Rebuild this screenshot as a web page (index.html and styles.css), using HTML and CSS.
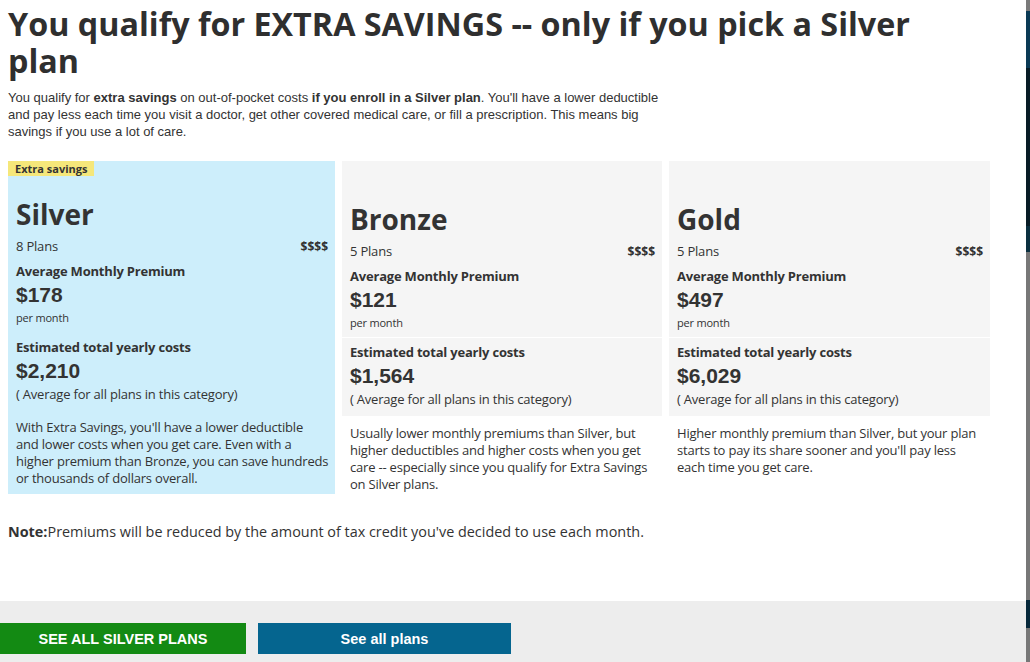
FILE: index.html
```html
<!DOCTYPE html>
<html>
  <head>
    <meta charset="utf-8" />
    <title>Extra savings</title>
    <link rel="stylesheet" href="styles.css">
  </head>
  <body>
    <div class="page">
      <div class="modal">
        <div class="content">
          <h1>You qualify for EXTRA SAVINGS -- only if you pick a Silver plan</h1>
          <p class="intro">
            You qualify for <b>extra savings</b> on out-of-pocket costs <b>if you enroll in a Silver plan</b>. You'll have a lower deductible
            and pay less each time you visit a doctor, get other covered medical care, or fill a prescription. This means big
            savings if you use a lot of care.
          </p>

          <div class="tiers">
            <!-- silver gets the highlight and the badge -->
            <div class="tier tier-silver">
              <div class="tier-top">
                <span class="badge">Extra savings</span>
                <h2>Silver</h2>
                <div class="tier-count"><span>8 Plans</span><b>$$$$</b></div>
                <div class="label">Average Monthly Premium</div>
                <div class="amount">$178</div>
                <div class="per">per month</div>
              </div>
              <div class="tier-cost">
                <div class="label">Estimated total yearly costs</div>
                <div class="amount">$2,210</div>
                <div class="avg">( Average for all plans in this category)</div>
              </div>
              <div class="tier-desc">
                With Extra Savings, you'll have a lower deductible<br>
                and lower costs when you get care. Even with a higher premium than Bronze, you can save hundreds or thousands of dollars overall.
              </div>
            </div>

            <div class="tier">
              <div class="tier-top">
                <span class="badge-space"></span>
                <h2>Bronze</h2>
                <div class="tier-count"><span>5 Plans</span><b>$$$$</b></div>
                <div class="label">Average Monthly Premium</div>
                <div class="amount">$121</div>
                <div class="per">per month</div>
              </div>
              <div class="tier-cost">
                <div class="label">Estimated total yearly costs</div>
                <div class="amount">$1,564</div>
                <div class="avg">( Average for all plans in this category)</div>
              </div>
              <div class="tier-desc">
                Usually lower monthly premiums than Silver, but higher deductibles and higher costs when you get care -- especially since you qualify for Extra Savings on Silver plans.
              </div>
            </div>

            <div class="tier">
              <div class="tier-top">
                <span class="badge-space"></span>
                <h2>Gold</h2>
                <div class="tier-count"><span>5 Plans</span><b>$$$$</b></div>
                <div class="label">Average Monthly Premium</div>
                <div class="amount">$497</div>
                <div class="per">per month</div>
              </div>
              <div class="tier-cost">
                <div class="label">Estimated total yearly costs</div>
                <div class="amount">$6,029</div>
                <div class="avg">( Average for all plans in this category)</div>
              </div>
              <div class="tier-desc">
                Higher monthly premium than Silver, but your plan starts to pay its share sooner and you'll pay less each time you get care.
              </div>
            </div>
          </div>

          <p class="note"><b>Note:</b>Premiums will be reduced by the amount of tax credit you've decided to use each month.</p>
        </div>

        <div class="actions">
          <button class="btn btn-green">SEE ALL SILVER PLANS</button>
          <button class="btn btn-blue">See all plans</button>
        </div>
      </div>
      <div class="backdrop"></div>
    </div>
  </body>
</html>
```

FILE: styles.css
```css
html,
body {
  margin: 0;
  height: 100%;
  overflow: hidden;
}

body {
  font-family: "Open Sans", Arial, sans-serif;
  color: #333;
  background: #fff;
}

.page {
  display: flex;
  height: 662px;
}

.modal {
  flex: 1;
  display: flex;
  flex-direction: column;
}

/* the page behind the modal shows through on the right */
.backdrop {
  width: 4px;
  background: linear-gradient(
    to bottom,
    #7a7a7a 0 11px,
    #0b3a55 11px 68px,
    #081c26 68px 226px,
    #0b3040 226px 252px,
    #777 252px 600px,
    #06283a 600px 628px,
    #777 628px
  );
}

.content {
  flex: 1;
  padding: 0 8px;
}

h1 {
  margin: 0;
  max-width: 960px;
  padding-top: 5px;
  font-size: 32.3px;
  line-height: 37px;
  font-weight: 700;
  color: #2f2f2f;
}

.intro {
  margin: 10px 0 0;
  width: 660px;
  font-family: "Liberation Sans", Arial, sans-serif;
  font-size: 13px;
  line-height: 17px;
}

.tiers {
  display: grid;
  grid-template-columns: 327px 320px 321px;
  align-items: start;
  gap: 7px;
  margin-top: 21px;
}

.tier {
  display: flex;
  flex-direction: column;
  letter-spacing: -0.2px;
}

.tier-top,
.tier-cost {
  background: #f5f5f5;
  padding: 0 7px 0 8px;
}

.tier-top {
  padding-bottom: 7px;
}

.tier-cost {
  margin-top: 1px;
  padding-top: 6px;
  padding-bottom: 8px;
}

.tier-desc {
  padding: 9px 8px 7px;
  font-size: 13px;
  line-height: 17px;
}

.tier-silver {
  background: #cdeefb;
}

.tier-silver .tier-top,
.tier-silver .tier-cost {
  background: transparent;
}

.tier-silver .tier-desc {
  padding: 8px 5px 7px 8px;
}

.badge {
  display: block;
  width: fit-content;
  margin-left: -8px;
  padding: 0 7px;
  height: 15px;
  line-height: 15px;
  font-size: 11px;
  font-weight: 700;
  letter-spacing: 0;
  background: #f5e77a;
}

.badge-space {
  display: block;
  height: 20px;
}

h2 {
  margin: 21px 0 0;
  font-size: 28px;
  line-height: 34px;
  font-weight: 700;
  letter-spacing: 0;
}

.tier-count {
  display: flex;
  justify-content: space-between;
  margin-top: 7px;
  font-size: 13px;
  line-height: 17px;
}

.tier-count b {
  font-size: 12px;
  letter-spacing: 0;
}

.label {
  margin-top: 8px;
  font-size: 13px;
  line-height: 17px;
  font-weight: 700;
}

.tier-cost .label {
  margin-top: 0;
}

.amount {
  margin-top: 2px;
  font-family: "Liberation Sans", Arial, sans-serif;
  font-size: 21px;
  line-height: 26px;
  font-weight: 700;
  letter-spacing: 0;
}

.per {
  margin-top: 2px;
  font-size: 11px;
  line-height: 15px;
}

.avg {
  margin-top: 2px;
  font-size: 13px;
  line-height: 17px;
}

.note {
  margin: 22px 0 0;
  font-size: 14.4px;
  line-height: 19px;
}

.actions {
  display: flex;
  gap: 12px;
  height: 61px;
  padding-top: 22px;
  box-sizing: border-box;
  background: #ededed;
}

.btn {
  height: 31px;
  border: 0;
  color: #fff;
  font-family: "Liberation Sans", Arial, sans-serif;
  font-size: 14.5px;
  font-weight: 700;
}

.btn-green {
  width: 246px;
  background: #138a13;
}

.btn-blue {
  width: 253px;
  background: #05658f;
}
```
